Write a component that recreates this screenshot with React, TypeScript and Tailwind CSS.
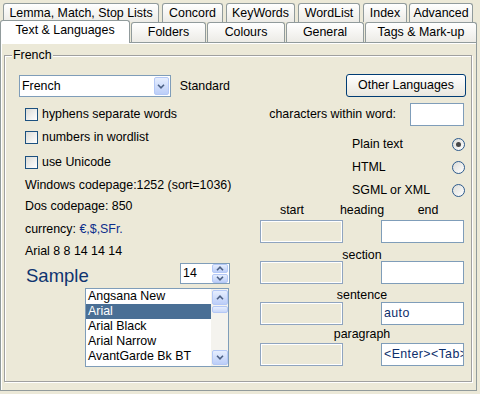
import React from "react";

// small chevron used by combo, spinner and scrollbar buttons
function Chevron({ up = false }: { up?: boolean }) {
  return (
    <svg width="8" height="5" viewBox="0 0 8 5">
      <path d={up ? "M1 4.2L4 1.2L7 4.2" : "M1 0.8L4 3.8L7 0.8"} fill="none" stroke="#4D6185" strokeWidth="1.6" />
    </svg>
  );
}

function ArrowButton({ up = false, className = "" }: { up?: boolean; className?: string }) {
  return (
    <div className={`flex items-center justify-center border border-[#B4C8F6] rounded-[2px] bg-linear-to-b from-[#E6EEFE] to-[#BCCEF8] ${className}`}>
      <Chevron up={up} />
    </div>
  );
}

const tabCls =
  "h-full flex items-center justify-center border border-b-0 border-[#919B9C] rounded-t-[3px] bg-linear-to-b from-white to-[#ECEBE6] leading-none";

function CheckRow({ label, className }: { label: string; className: string }) {
  return (
    <div className={`flex items-center h-[13px] ml-[6px] ${className}`}>
      <div className="w-[13px] h-[13px] border border-[#1C5180] bg-linear-to-br from-[#DCDCD7] to-white" />
      <span className="ml-[4px]">{label}</span>
    </div>
  );
}

function RadioRow({ label, checked, className = "" }: { label: string; checked?: boolean; className?: string }) {
  return (
    <div className={`flex items-center justify-between h-[23px] pl-[92px] pr-[1px] ${className}`}>
      <span>{label}</span>
      <div className="w-[13px] h-[13px] rounded-full border border-[#2C5A8C] bg-linear-to-br from-[#DCDCD7] to-white flex items-center justify-center">
        {checked && <div className="w-[5px] h-[5px] rounded-full bg-[#474747]" />}
      </div>
    </div>
  );
}

function Field({ disabled, value }: { disabled?: boolean; value?: string }) {
  return disabled ? (
    <div className="w-[83px] h-[23px] border border-[#8FA4BF] bg-[#ECE9D8] shadow-[inset_-1px_-1px_0_#fff,inset_1px_1px_0_#fff]" />
  ) : (
    <div className="w-[83px] h-[23px] border border-[#7F9DB9] bg-white pl-[2px] flex items-center overflow-hidden whitespace-nowrap tracking-[0.4px] text-[#0D2E6B]">
      {value}
    </div>
  );
}

const fonts = ["Angsana New", "Arial", "Arial Black", "Arial Narrow", "AvantGarde Bk BT"];

export default function App() {
  return (
    <div className="w-[480px] h-[394px] bg-[#ECE9D8] overflow-hidden font-['Liberation_Sans',Arial,sans-serif] text-[12.4px] text-black">
      {/* Tab rows */}
      <div className="flex pt-[3px] pl-[3px] h-[22px]">
        <div className={`${tabCls} w-[156px]`}>Lemma, Match, Stop Lists</div>
        <div className={`${tabCls} w-[61px] ml-[3px]`}>Concord</div>
        <div className={`${tabCls} w-[69px] ml-[3px]`}>KeyWords</div>
        <div className={`${tabCls} w-[62px] ml-[3px]`}>WordList</div>
        <div className={`${tabCls} w-[44px] ml-[3px]`}>Index</div>
        <div className={`${tabCls} w-[64px] ml-[2px]`}>Advanced</div>
      </div>
      <div className="flex items-end h-[20px]">
        <div className="relative z-10 w-[130px] h-[23px] -mb-[1px] border border-b-0 border-[#919B9C] rounded-t-[3px] bg-white flex justify-center pt-[2px] leading-[14px]">
          Text &amp; Languages
        </div>
        <div className={`${tabCls} w-[75px] ml-[1px]`}>Folders</div>
        <div className={`${tabCls} w-[78px] ml-[1px]`}>Colours</div>
        <div className={`${tabCls} w-[78px] ml-[1px]`}>General</div>
        <div className={`${tabCls} w-[112px] ml-[1px]`}>Tags &amp; Mark-up</div>
      </div>

      {/* Panel */}
      <div className="relative w-[477px] h-[349px] border border-[#919B9C] bg-[#ECE9D8] shadow-[inset_1px_1px_0_#fff] pt-[12px] pl-[3px]">
        <div className="relative w-[468px] h-[327px] border border-[#A0A0A0] shadow-[1px_1px_0_#fff,inset_1px_1px_0_#fff] flex justify-between pl-[14px] pr-[5px]">
          <span className="absolute left-[7px] -top-[8px] bg-[#ECE9D8] px-[1px] leading-[14px]">French</span>

          {/* Left column */}
          <div className="flex flex-col w-[211px] pt-[19px]">
            <div className="flex items-center h-[22px]">
              <div className="flex items-center w-[153px] h-[22px] border border-[#7F9DB9] bg-white pl-[2px]">
                <span>French</span>
                <ArrowButton className="ml-auto mr-[1px] w-[15px] h-[18px]" />
              </div>
              <span className="ml-[9px]">Standard</span>
            </div>
            <CheckRow label="hyphens separate words" className="mt-[11px]" />
            <CheckRow label="numbers in wordlist" className="mt-[10px]" />
            <CheckRow label="use Unicode" className="mt-[12px]" />
            <div className="ml-[6px] mt-[8px] h-[16px] leading-[16px] whitespace-nowrap">Windows codepage:1252 (sort=1036)</div>
            <div className="ml-[6px] mt-[5px] h-[16px] leading-[16px]">Dos codepage: 850</div>
            <div className="ml-[6px] mt-[7px] h-[16px] leading-[16px]">
              currency: <span className="text-[#0D2E8B]">€,$,SFr.</span>
            </div>
            <div className="ml-[6px] mt-[6px] h-[16px] leading-[16px]">Arial 8 8 14 14 14</div>
            <div className="flex items-start mt-[4px] h-[21px]">
              <span className="ml-[7px] mt-[2px] text-[18.5px] leading-[21px] text-[#0F3470]">Sample</span>
              <div className="ml-auto flex items-center w-[50px] h-[21px] border border-[#7F9DB9] bg-white pl-[2px]">
                <span>14</span>
                <div className="ml-auto mr-[1px] flex flex-col gap-[1px]">
                  <ArrowButton up className="w-[16px] h-[9px]" />
                  <ArrowButton className="w-[16px] h-[9px]" />
                </div>
              </div>
            </div>
            <div className="flex ml-[66px] mt-[4px] w-[144px] h-[79px] border border-[#7F9DB9] bg-white">
              <div className="flex-1 flex flex-col">
                {fonts.map((f) => (
                  <div
                    key={f}
                    className={`h-[15px] leading-[15px] pl-[2px] whitespace-nowrap ${f === "Arial" ? "bg-[#4A6F95] text-white" : ""}`}
                  >
                    {f}
                  </div>
                ))}
              </div>
              <div className="w-[17px] flex flex-col items-center py-[1px] bg-[#F4F3EE]">
                <ArrowButton up className="w-[16px] h-[15px]" />
                <div className="mt-[1px] w-[16px] h-[7px] rounded-[2px] border border-[#B4C8F6] bg-linear-to-b from-[#E6EEFE] to-[#C8D7F9]" />
                <ArrowButton className="mt-auto w-[16px] h-[15px]" />
              </div>
            </div>
          </div>

          {/* Right column */}
          <div className="flex flex-col w-[206px] pt-[18px]">
            <div className="flex justify-end">
              <div className="w-[120px] h-[23px] flex items-center justify-center border border-[#003C74] rounded-[3px] bg-linear-to-b from-white to-[#E9E7DE]">
                Other Languages
              </div>
            </div>
            <div className="flex justify-end items-center gap-[14px] mt-[6px] h-[23px] pr-[2px]">
              <span className="whitespace-nowrap">characters within word:</span>
              <div className="w-[54px] h-[23px] border border-[#7F9DB9] bg-white" />
            </div>
            <RadioRow label="Plain text" checked className="mt-[7px]" />
            <RadioRow label="HTML" />
            <RadioRow label="SGML or XML" />

            <div className="grid grid-cols-[64px_76px_56px] mt-[2px] h-[12px] leading-[12px] text-center">
              <span>start</span>
              <span>heading</span>
              <span>end</span>
            </div>
            <div className="flex justify-between pr-[2px] mt-[4px]">
              <Field disabled />
              <Field />
            </div>
            <div className="w-[204px] text-center mt-[6px] h-[12px] leading-[12px]">section</div>
            <div className="flex justify-between pr-[2px]">
              <Field disabled />
              <Field />
            </div>
            <div className="w-[204px] text-center mt-[5px] h-[12px] leading-[12px]">sentence</div>
            <div className="flex justify-between pr-[2px] mt-[1px]">
              <Field disabled />
              <Field value="auto" />
            </div>
            <div className="w-[204px] text-center mt-[3px] h-[12px] leading-[12px]">paragraph</div>
            <div className="flex justify-between pr-[2px] mt-[3px]">
              <Field disabled />
              <Field value="<Enter><Tab>" />
            </div>
          </div>
        </div>
      </div>
    </div>
  );
}
